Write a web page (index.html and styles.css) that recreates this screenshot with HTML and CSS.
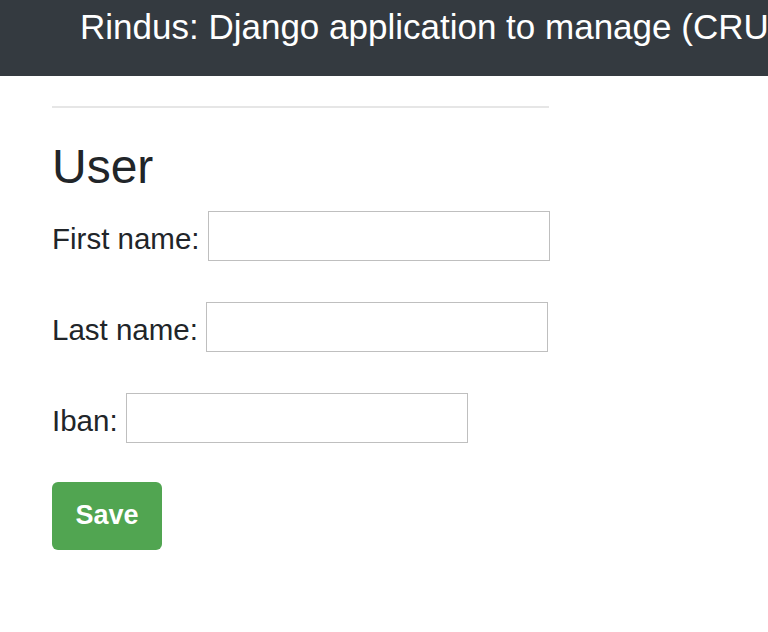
FILE: index.html
```html
<!DOCTYPE html>
<html lang="en">
<head>
<meta charset="utf-8">
<title>User</title>
<link rel="stylesheet" href="styles.css">
</head>
<body>
<header class="topbar">
  <div class="topbar-title">Rindus: Django application to manage (CRUD) users</div>
</header>
<main class="content">
  <hr class="divider">
  <h1 class="page-title">User</h1>
  <form class="user-form">
    <p class="form-row"><label class="form-label" for="id_first_name">First name:</label><input class="form-input" type="text" id="id_first_name"></p>
    <p class="form-row"><label class="form-label" for="id_last_name">Last name:</label><input class="form-input" type="text" id="id_last_name"></p>
    <p class="form-row"><label class="form-label" for="id_iban">Iban:</label><input class="form-input" type="text" id="id_iban"></p>
    <button class="btn-save" type="submit">Save</button>
  </form>
</main>
</body>
</html>
```
FILE: styles.css
```css
html, body {
  margin: 0;
  padding: 0;
  background: #ffffff;
  overflow: hidden;
}
body {
  font-family: "Liberation Sans", Arial, Helvetica, sans-serif;
  color: #212529;
}
.topbar {
  background: #343a40;
  height: 76px;
  box-sizing: border-box;
  padding: 7px 0 0 80px;
  white-space: nowrap;
  overflow: hidden;
}
.topbar-title {
  color: #ffffff;
  font-size: 35px;
  line-height: 40px;
}
.content {
  padding-left: 52px;
  width: 497px;
}
.divider {
  margin: 30px 0 0 0;
  border: 0;
  border-top: 2px solid #e6e6e6;
  height: 0;
}
.page-title {
  font-size: 48px;
  font-weight: 500;
  line-height: 57.6px;
  margin: 30px 0 15px 0;
}
.user-form {
  display: flex;
  flex-direction: column;
  align-items: flex-start;
}
.form-row {
  display: flex;
  align-items: center;
  margin: 0 0 41px 0;
  font-size: 29.5px;
  white-space: nowrap;
}
.form-row:nth-child(3) {
  margin-bottom: 39px;
}
.form-label {
  flex-shrink: 0;
  margin: 6px 8px 0 0;
}
.form-input {
  flex-shrink: 0;
  width: 342px;
  height: 50px;
  box-sizing: border-box;
  border: 1px solid #bfbfbf;
  border-radius: 0;
  padding: 4px 8px;
  font-size: 20px;
  font-family: inherit;
}
.btn-save {
  width: 110px;
  height: 68px;
  background: #51a551;
  color: #ffffff;
  border: 0;
  border-radius: 6px;
  font-family: inherit;
  font-size: 27px;
  font-weight: bold;
  padding: 0;
}
```
